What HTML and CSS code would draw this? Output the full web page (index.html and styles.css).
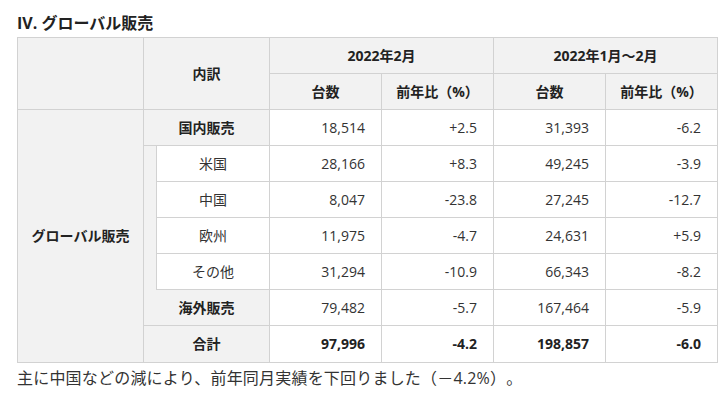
FILE: index.html
```html
<!DOCTYPE html>
<html lang="ja">
<head>
<meta charset="utf-8">
<link rel="stylesheet" href="styles.css">
</head>
<body>
<div class="page">
  <h2 class="title">IV. グローバル販売</h2>
  <table class="sales">
    <colgroup>
      <col class="c-label">
      <col class="c-indent">
      <col class="c-sub">
      <col class="c-num">
      <col class="c-num">
      <col class="c-num">
      <col class="c-num">
    </colgroup>
    <thead>
      <tr>
        <th rowspan="2"></th>
        <th rowspan="2" colspan="2">内訳</th>
        <th colspan="2">2022年2月</th>
        <th colspan="2">2022年1月〜2月</th>
      </tr>
      <tr>
        <th>台数</th>
        <th>前年比（%）</th>
        <th>台数</th>
        <th>前年比（%）</th>
      </tr>
    </thead>
    <tbody>
      <tr>
        <th rowspan="7" class="group">グローバル販売</th>
        <th colspan="2">国内販売</th>
        <td>18,514</td><td>+2.5</td><td>31,393</td><td>-6.2</td>
      </tr>
      <tr>
        <th rowspan="4" class="indent"></th>
        <td class="sub">米国</td>
        <td>28,166</td><td>+8.3</td><td>49,245</td><td>-3.9</td>
      </tr>
      <tr>
        <td class="sub">中国</td>
        <td>8,047</td><td>-23.8</td><td>27,245</td><td>-12.7</td>
      </tr>
      <tr>
        <td class="sub">欧州</td>
        <td>11,975</td><td>-4.7</td><td>24,631</td><td>+5.9</td>
      </tr>
      <tr>
        <td class="sub">その他</td>
        <td>31,294</td><td>-10.9</td><td>66,343</td><td>-8.2</td>
      </tr>
      <tr>
        <th colspan="2">海外販売</th>
        <td>79,482</td><td>-5.7</td><td>167,464</td><td>-5.9</td>
      </tr>
      <tr class="total">
        <th colspan="2">合計</th>
        <td>97,996</td><td>-4.2</td><td>198,857</td><td>-6.0</td>
      </tr>
    </tbody>
  </table>
  <p class="note">主に中国などの減により、前年同月実績を下回りました（－4.2%）。</p>
</div>
</body>
</html>
```

FILE: styles.css
```css
html, body {
  margin: 0;
  padding: 0;
  background: #ffffff;
}
body {
  font-family: "Open Sans", "Noto Sans CJK JP", sans-serif;
  color: #333333;
  text-spacing-trim: space-all;
}
.page {
  padding: 0 17px;
}
.title {
  margin: 11px 0 2px;
  font-size: 16px;
  line-height: 24px;
  font-weight: 700;
  color: #222222;
}
.sales {
  border-collapse: collapse;
  table-layout: fixed;
  width: 701px;
  font-size: 14px;
  line-height: 20px;
}
.c-label { width: 126px; }
.c-indent { width: 13px; }
.c-sub { width: 113px; }
.c-num { width: 112px; }
.sales th,
.sales td {
  border: 1px solid #d2d2d2;
  height: 36px;
  padding: 0 16px;
  box-sizing: border-box;
  white-space: nowrap;
}
.sales th {
  background: #f2f2f2;
  font-weight: 700;
  text-align: center;
  color: #222222;
  padding: 0 4px;
}
.sales td {
  background: #ffffff;
  text-align: right;
}
.sales td.sub {
  text-align: center;
}
.sales th.indent {
  padding: 0;
  border-bottom-style: hidden;
}
.sales th.group {
  padding: 0;
}
.total td {
  font-weight: 700;
  color: #222222;
}
.sales tr.total th,
.sales tr.total td {
  height: 37px;
}
.note {
  margin: 3px 0 0;
  font-size: 16px;
  line-height: 24px;
  letter-spacing: 0.2px;
  color: #333333;
}
```
